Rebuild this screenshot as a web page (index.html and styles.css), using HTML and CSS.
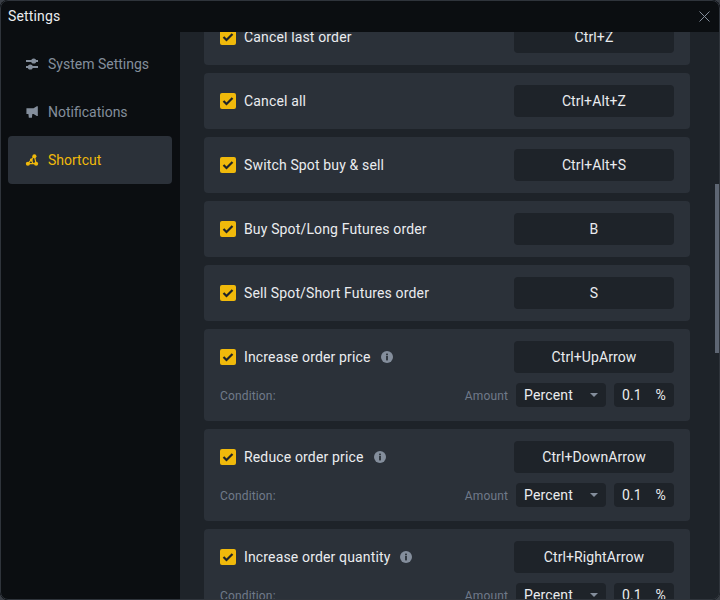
FILE: index.html
```html
<!DOCTYPE html>
<html lang="en">
<head>
<meta charset="utf-8">
<title>Settings</title>
<link rel="stylesheet" href="styles.css">
</head>
<body>
<div class="window">
  <header class="titlebar">
    <span class="title">Settings</span>
    <svg class="close" viewBox="0 0 11 11"><path d="M.5.5l10 10M10.5.5l-10 10"/></svg>
  </header>
  <div class="main">
    <nav class="sidebar">
      <div class="nav-item">
        <svg class="nav-icon" viewBox="0 0 14 14"><path d="M0 2.4h14v2.2H0zM0 9.4h14v2.2H0z"/><circle cx="9" cy="3.5" r="3"/><circle cx="5" cy="10.5" r="3"/></svg>
        <span>System Settings</span>
      </div>
      <div class="nav-item">
        <svg class="nav-icon" viewBox="0 0 14 14"><path d="M.5 2.6h8.3L12.6.4h1.2v11.2h-1.2L8.8 9.4H7.4L6.9 13.6H3.3L2.8 9.4H.5z"/></svg>
        <span>Notifications</span>
      </div>
      <div class="nav-item active">
        <svg class="nav-icon" viewBox="0 0 14 14"><path class="nav-line" d="M9.8 2.6L2.2 11.3h9.6L9.8 2.6M6.2 7l2.2 4.3"/><circle cx="9.8" cy="2.6" r="2.4"/><circle cx="2.2" cy="11.3" r="2.4"/><circle cx="11.8" cy="11.3" r="2.4"/><circle cx="6.2" cy="7" r="1.7"/></svg>
        <span>Shortcut</span>
      </div>
    </nav>
    <section class="content">
      <div class="list">
        <div class="row"><div class="line"><span class="check"><svg viewBox="0 0 16 16"><path d="M3.5 8l3 3 6-6"/></svg></span><span class="label">Cancel last order</span><span class="key">Ctrl+Z</span></div></div>
        <div class="row"><div class="line"><span class="check"><svg viewBox="0 0 16 16"><path d="M3.5 8l3 3 6-6"/></svg></span><span class="label">Cancel all</span><span class="key">Ctrl+Alt+Z</span></div></div>
        <div class="row"><div class="line"><span class="check"><svg viewBox="0 0 16 16"><path d="M3.5 8l3 3 6-6"/></svg></span><span class="label">Switch Spot buy &amp; sell</span><span class="key">Ctrl+Alt+S</span></div></div>
        <div class="row"><div class="line"><span class="check"><svg viewBox="0 0 16 16"><path d="M3.5 8l3 3 6-6"/></svg></span><span class="label">Buy Spot/Long Futures order</span><span class="key">B</span></div></div>
        <div class="row"><div class="line"><span class="check"><svg viewBox="0 0 16 16"><path d="M3.5 8l3 3 6-6"/></svg></span><span class="label">Sell Spot/Short Futures order</span><span class="key">S</span></div></div>
        <div class="row">
          <div class="line"><span class="check"><svg viewBox="0 0 16 16"><path d="M3.5 8l3 3 6-6"/></svg></span><span class="label">Increase order price</span><svg class="info" viewBox="0 0 12 12"><circle cx="6" cy="6" r="6"/><rect class="info-mark" x="5.1" y="5" width="1.8" height="4.4"/><rect class="info-mark" x="5.1" y="2.6" width="1.8" height="1.7"/></svg><span class="key">Ctrl+UpArrow</span></div>
          <div class="cond"><span class="hint">Condition:</span><span class="hint amount">Amount</span><span class="select">Percent<i class="caret"></i></span><span class="value"><b>0.1</b><b>%</b></span></div>
        </div>
        <div class="row">
          <div class="line"><span class="check"><svg viewBox="0 0 16 16"><path d="M3.5 8l3 3 6-6"/></svg></span><span class="label">Reduce order price</span><svg class="info" viewBox="0 0 12 12"><circle cx="6" cy="6" r="6"/><rect class="info-mark" x="5.1" y="5" width="1.8" height="4.4"/><rect class="info-mark" x="5.1" y="2.6" width="1.8" height="1.7"/></svg><span class="key">Ctrl+DownArrow</span></div>
          <div class="cond"><span class="hint">Condition:</span><span class="hint amount">Amount</span><span class="select">Percent<i class="caret"></i></span><span class="value"><b>0.1</b><b>%</b></span></div>
        </div>
        <div class="row">
          <div class="line"><span class="check"><svg viewBox="0 0 16 16"><path d="M3.5 8l3 3 6-6"/></svg></span><span class="label">Increase order quantity</span><svg class="info" viewBox="0 0 12 12"><circle cx="6" cy="6" r="6"/><rect class="info-mark" x="5.1" y="5" width="1.8" height="4.4"/><rect class="info-mark" x="5.1" y="2.6" width="1.8" height="1.7"/></svg><span class="key">Ctrl+RightArrow</span></div>
          <div class="cond"><span class="hint">Condition:</span><span class="hint amount">Amount</span><span class="select">Percent<i class="caret"></i></span><span class="value"><b>0.1</b><b>%</b></span></div>
        </div>
      </div>
      <div class="thumb"></div>
    </section>
  </div>
</div>
</body>
</html>
```
FILE: styles.css
```css
* { box-sizing: border-box; }
html, body { margin: 0; height: 100%; background: #3a3f46; overflow: hidden; }
body { font-family: "Roboto", "Liberation Sans", sans-serif; font-size: 14px; letter-spacing: .15px; color: #eaecef; }
.window { position: relative; width: 720px; height: 600px; display: flex; flex-direction: column; background: #0b0e11; border-radius: 8px; overflow: hidden; }
.window::after { content: ""; position: absolute; inset: 0; border: 1px solid #2f343b; border-radius: 8px; pointer-events: none; }
.titlebar { height: 32px; flex: none; display: flex; align-items: center; justify-content: space-between; padding: 0 10px 0 8px; background: #0b0e11; }
.title { font-size: 14px; color: #eaecef; }
.close { width: 11px; height: 11px; fill: none; stroke: #848e9c; stroke-width: 1; }
.main { flex: 1; display: flex; min-height: 0; }
.sidebar { width: 180px; flex: none; display: flex; flex-direction: column; padding: 8px; background: #0b0e11; letter-spacing: 0; }
.nav-item { height: 48px; display: flex; align-items: center; gap: 10px; padding-left: 18px; border-radius: 4px; color: #848e9c; }
.nav-item.active { background: #2b3139; color: #f0b90b; }
.nav-icon { width: 12px; height: 12px; flex: none; fill: currentColor; overflow: visible; }
.nav-line { fill: none; stroke: currentColor; stroke-width: 1.4; }
.content { flex: 1; position: relative; overflow: hidden; background: #1e2329; padding: 0 30px 0 24px; }
.list { display: flex; flex-direction: column; gap: 8px; margin-top: -23px; }
.row { background: #2b3139; border-radius: 4px; padding: 12px 16px; }
.line { height: 32px; display: flex; align-items: center; }
.check { width: 16px; height: 16px; flex: none; background: #f0b90b; border-radius: 2px; margin-right: 8px; display: flex; }
.check svg { width: 16px; height: 16px; fill: none; stroke: #1e2329; stroke-width: 2.2; }
.label { color: #eaecef; }
.info { width: 12px; height: 12px; margin-left: 10px; fill: #848e9c; }
.info-mark { fill: #2b3139; }
.key { width: 160px; height: 32px; margin-left: auto; display: flex; align-items: center; justify-content: center; background: #1e2329; border-radius: 4px; color: #eaecef; letter-spacing: .1px; }
.cond { height: 24px; margin-top: 10px; margin-bottom: 2px; display: flex; align-items: center; font-size: 12px; color: #707a8a; }
.hint { padding-top: 2px; }
.amount { margin-left: auto; margin-right: 8px; }
.select { width: 90px; height: 24px; display: flex; align-items: center; justify-content: space-between; padding: 0 8px; background: #1e2329; border-radius: 4px; font-size: 14px; color: #eaecef; }
.caret { width: 0; height: 0; border: 4px solid transparent; border-top: 4px solid #848e9c; border-bottom: 0; }
.value { width: 60px; height: 24px; margin-left: 8px; display: flex; align-items: center; justify-content: space-between; padding: 0 8px; background: #1e2329; border-radius: 4px; font-size: 14px; color: #eaecef; }
.value b { font-weight: 400; }
.thumb { position: absolute; right: 1px; top: 152px; width: 4px; height: 169px; background: #5e6673; }
```
